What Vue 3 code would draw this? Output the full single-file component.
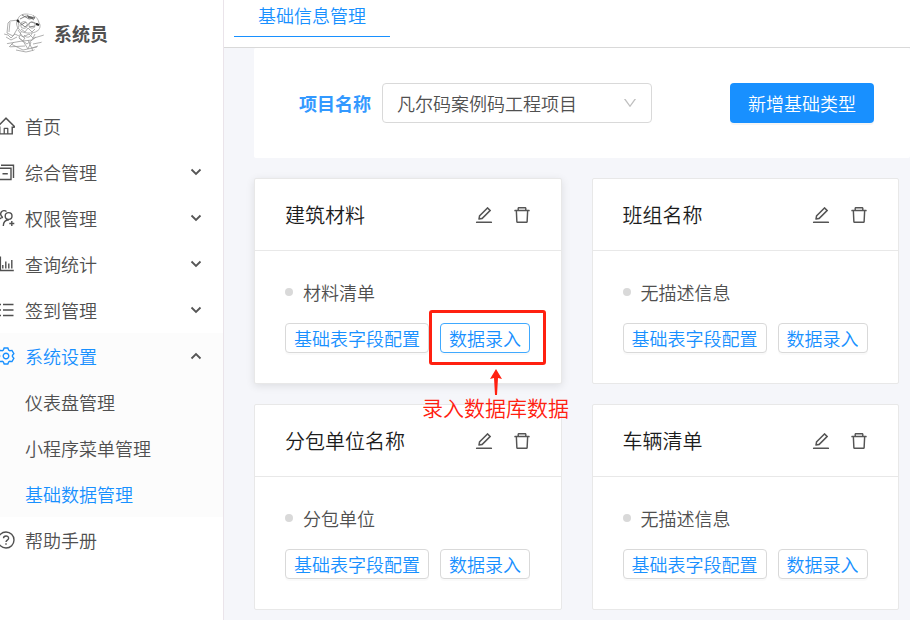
<template>
  <div class="layout">
    <aside class="sidebar">
      <div class="user">
        <svg class="avatar" width="40" height="40" viewBox="0 0 40 40" fill="none" stroke="#9a9a9a" stroke-width="0.8">
          <path d="M4 10L6 8L14 7L15 13L9 23L3 20L4 10M6 9L5 19M0 21L4 22L7 25L11 21L15 23M2 24L7 27L13 24"/>
          <path d="M14 7C14 3 18 1 22 1C29 0 34 4 35 10C37 12 36 17 33 18C30 21 17 21 15 16C12 13 12 9 14 7"/>
          <path d="M16 6L22 3L31 5M18 2L25 6L31 5L29 2M23 2L30 7M15 9L21 14L27 9L34 11M17 12L22 9M25 14L31 13" stroke="#666"/>
          <circle cx="20" cy="12" r="3.4"/>
          <circle cx="28" cy="12" r="3.2"/>
          <path d="M17 19L15 25L19 28L28 27L31 21M20 22C23 26 27 24 28 20M19 28L24 36L27 29M24 27L29 38M15 25L23 31L32 24M16 22L21 25L18 29M14 17L19 24L25 21L30 26M17 16L21 19L24 15L28 19L31 16"/>
          <path d="M1 31L18 28M3 34L21 33M30 25L40 22M29 31L39 29M7 31L19 37L33 34M12 37L22 39L31 37M28 35L34 33M10 29L5 34"/>
          <path d="M13 7L15 9M32 11L35 12" stroke="#222" stroke-width="2"/>
          <path d="M24 4L29 5" stroke="#666" stroke-width="2"/>
        </svg>
        <span>系统员</span>
      </div>

      <nav class="menu">
        <div v-for="item in menu" :key="item.label" class="group" :class="{ open: item.children }">
          <a href="#" class="menu-item" :class="{ active: item.children }">
            <svg v-if="item.icon.fill" class="icon" width="18" height="18" viewBox="64 64 896 896" fill="currentColor">
              <path :d="item.icon.fill"/>
            </svg>
            <svg v-else class="icon" width="18" height="18" viewBox="0 0 18 18" fill="none" stroke="currentColor" stroke-width="1.4">
              <path :d="item.icon.line"/>
            </svg>
            <span>{{ item.label }}</span>
            <svg v-if="item.arrow" class="arrow" width="12" height="8" viewBox="0 0 12 8" fill="none" stroke="#555" stroke-width="1.8">
              <path :d="item.children ? 'M1.5 6.5L6 2L10.5 6.5' : 'M1.5 1.5L6 6L10.5 1.5'"/>
            </svg>
          </a>
          <a v-for="child in item.children" :key="child" href="#" class="menu-item sub" :class="{ active: child === current }">
            {{ child }}
          </a>
        </div>
      </nav>
    </aside>

    <main class="main">
      <header class="tabs">
        <a href="#" class="tab">基础信息管理</a>
      </header>

      <section class="filter">
        <label for="project">项目名称</label>
        <div class="select-box">
          <select id="project" v-model="project">
            <option>凡尔码案例码工程项目</option>
          </select>
          <svg width="14" height="14" viewBox="64 64 896 896" fill="#bfbfbf">
            <path :d="icons.down"/>
          </svg>
        </div>
        <button class="primary">新增基础类型</button>
      </section>

      <section class="cards">
        <article v-for="(card, i) in cards" :key="card.title" class="card" :class="{ raised: i === 0 }">
          <div class="card-head">
            <h3>{{ card.title }}</h3>
            <button class="icon-btn" aria-label="编辑">
              <svg width="18" height="18" viewBox="64 64 896 896" fill="currentColor"><path :d="icons.edit"/></svg>
            </button>
            <button class="icon-btn" aria-label="删除">
              <svg width="18" height="18" viewBox="64 64 896 896" fill="currentColor"><path :d="icons.trash"/></svg>
            </button>
          </div>
          <div class="card-body">
            <p class="desc">{{ card.desc }}</p>
            <div class="actions">
              <button class="small">基础表字段配置</button>
              <div class="entry">
                <button class="small" :class="{ focused: i === 0 }">数据录入</button>
                <div v-if="i === 0" class="mark">
                  <div class="mark-note">
                    <svg width="12" height="26" viewBox="0 0 12 26" fill="#ff2010">
                      <path d="M6 0L12 10L8 9L7 26H5L4 9L0 10Z"/>
                    </svg>
                    <span>录入数据库数据</span>
                  </div>
                </div>
              </div>
            </div>
          </div>
        </article>
      </section>
    </main>
  </div>
</template>

<script setup>
import { ref } from 'vue'

// six teeth around a small hub
const gear = () => {
  const points = []
  for (let k = 0; k < 6; k++) {
    for (const [offset, r] of [[-24, 6.5], [-13, 8.2], [13, 8.2], [24, 6.5]]) {
      const a = ((k * 60 + 30 + offset) * Math.PI) / 180
      points.push(`${(9 + r * Math.cos(a)).toFixed(2)} ${(9 + r * Math.sin(a)).toFixed(2)}`)
    }
  }
  return `M${points.join('L')}Z M11.8 9A2.8 2.8 0 1 1 6.2 9A2.8 2.8 0 1 1 11.8 9Z`
}

const icons = {
  home: 'M946.5 505L560.1 118.8l-25.9-25.9a31.5 31.5 0 0 0-44.4 0L77.5 505a63.9 63.9 0 0 0-18.8 46c.4 35.2 29.7 63.3 64.9 63.3h42.5V940h691.8V614.3h43.4c17.1 0 33.2-6.7 45.3-18.8a63.6 63.6 0 0 0 18.7-45.3c0-17-6.7-33.1-18.8-45.2zM568 868H456V664h112v204zm217.9-325.7V868H632V640c0-22.1-17.9-40-40-40H432c-22.1 0-40 17.9-40 40v228H238.1V542.3h-96l370-369.7 23.1 23.1L882 542.3h-96.1z',
  down: 'M884 256h-75c-5.1 0-9.9 2.5-12.9 6.6L512 654.2 227.9 262.6c-3-4.1-7.8-6.6-12.9-6.6h-75c-6.5 0-10.3 7.4-6.5 12.7l352.6 486.1c12.8 17.6 39 17.6 51.7 0l352.6-486.1c3.9-5.3.1-12.7-6.4-12.7z',
  edit: 'M257.7 752c2 0 4-.2 6-.5L431.9 722c2-.4 3.9-1.3 5.3-2.8l423.9-423.9a9.96 9.96 0 0 0 0-14.1L694.9 114.9c-1.9-1.9-4.4-2.9-7.1-2.9s-5.2 1-7.1 2.9L256.8 538.8c-1.5 1.5-2.4 3.3-2.8 5.3l-29.5 168.2a33.5 33.5 0 0 0 9.4 29.8c6.6 6.4 14.9 9.9 23.8 9.9zm67.4-174.4L687.8 215l73.3 73.3-362.7 362.6-88.9 15.7 15.6-89zM880 836H144c-17.7 0-32 14.3-32 32v36c0 4.4 3.6 8 8 8h784c4.4 0 8-3.6 8-8v-36c0-17.7-14.3-32-32-32z',
  trash: 'M360 184h-8c4.4 0 8-3.6 8-8v8h304v-8c0 4.4 3.6 8 8 8h-8v72h72v-80c0-35.3-28.7-64-64-64H352c-35.3 0-64 28.7-64 64v80h72v-72zm504 72H160c-17.7 0-32 14.3-32 32v32c0 4.4 3.6 8 8 8h60.4l24.7 523c1.6 34.1 29.8 61 63.9 61h454c34.2 0 62.3-26.8 63.9-61l24.7-523H888c4.4 0 8-3.6 8-8v-32c0-17.7-14.3-32-32-32zM731.3 840H292.7l-24.2-512h487l-24.2 512z'
}

const current = ref('基础数据管理')
const project = ref('凡尔码案例码工程项目')

const menu = [
  { label: '首页', icon: { fill: icons.home } },
  { label: '综合管理', arrow: true, icon: { line: 'M2 5.2H14V16.5H2ZM4 2.2H16.5V15M5.5 10.8H10.8' } },
  { label: '权限管理', arrow: true, icon: { line: 'M15 7A3.4 3.4 0 1 1 8.2 7A3.4 3.4 0 1 1 15 7ZM6.3 17C6.3 13.5 8.5 11 12 10.8M14.8 12V17M12.3 14.5H17.3M9.5 2.6A3.4 3.4 0 1 0 5.5 8M1 14C1 11 2.8 9 6 8.4' } },
  { label: '查询统计', arrow: true, icon: { line: 'M3.4 1.5V15.5H16.8M5.8 10V13.5M8.8 6.5V13.5M11.8 8.5V13.5M14.8 5V13.5' } },
  { label: '签到管理', arrow: true, icon: { line: 'M6 3.5H16.5M6 9H16.5M6 14.5H16.5M1.5 3.5H4M1.5 9H4M1.5 14.5H4' } },
  {
    label: '系统设置',
    arrow: true,
    icon: { line: gear() },
    children: ['仪表盘管理', '小程序菜单管理', '基础数据管理']
  },
  { label: '帮助手册', icon: { line: 'M17 9A8 8 0 1 1 1 9A8 8 0 1 1 17 9ZM6.5 7.3C6.5 4.2 11.6 4.2 11.6 7.2C11.6 9.2 9 9 9 11M9 12.3V13.8' } }
]

const cards = [
  { title: '建筑材料', desc: '材料清单' },
  { title: '班组名称', desc: '无描述信息' },
  { title: '分包单位名称', desc: '分包单位' },
  { title: '车辆清单', desc: '无描述信息' }
]
</script>

<style>
body {
  margin: 0;
  background: #f5f6fa;
}
</style>

<style scoped>
.layout {
  display: flex;
  min-height: 100vh;
  font-family: "Noto Sans CJK SC", sans-serif;
  font-size: 18px;
  font-weight: 350;
  line-height: 24px;
  color: #505050;
}

a {
  color: inherit;
  text-decoration: none;
}

button,
select {
  box-sizing: border-box;
  font: inherit;
  cursor: pointer;
}

svg {
  display: block;
  flex: none;
}

.sidebar {
  flex: none;
  width: 223px;
  overflow: hidden;
  background: #fff;
  border-right: 1px solid #eae4ea;
}

.user {
  display: flex;
  align-items: center;
  gap: 10px;
  height: 40px;
  padding: 13px 4px 50px;
  font-weight: 700;
}

.avatar {
  border-radius: 50%;
}

.group.open {
  background: #fcfcfc;
}

.menu-item {
  display: flex;
  align-items: center;
  height: 46px;
  padding-right: 21px;
}

.menu-item .icon {
  margin: 0 10px 0 -3px;
}

.menu-item .arrow {
  margin-left: auto;
}

.menu-item.sub {
  padding-left: 25px;
}

.menu-item.active {
  color: #1890ff;
}

.main {
  flex: 1;
  min-width: 0;
}

.tabs {
  display: flex;
  align-items: flex-start;
  height: 47px;
  padding-left: 10px;
  background: #fff;
  border-bottom: 1px solid #d9d9d9;
}

.tab {
  padding: 3px 24px 9px;
  border-bottom: 1px solid #1890ff;
  color: #1890ff;
}

.filter {
  display: flex;
  align-items: center;
  margin-left: 30px;
  padding: 35px 36px 35px 45px;
  background: #fff;
  border-radius: 2px;
}

.filter label {
  margin-right: 11px;
  white-space: nowrap;
  font-weight: 700;
  color: #3399ff;
}

.select-box {
  position: relative;
  flex: 0 1 270px;
}

.select-box select {
  width: 100%;
  height: 40px;
  padding: 0 36px 0 14px;
  border: 1px solid #d9d9d9;
  border-radius: 4px;
  background: #fff;
  color: #505050;
  appearance: none;
}

.select-box svg {
  position: absolute;
  top: 13px;
  right: 15px;
  pointer-events: none;
}

.primary {
  height: 40px;
  margin-left: auto;
  padding: 0 18px;
  border: 0;
  border-radius: 4px;
  background: #1890ff;
  box-shadow: 0 2px 0 rgba(0, 0, 0, 0.04);
  color: #fff;
  white-space: nowrap;
}

.cards {
  display: grid;
  grid-template-columns: repeat(2, 1fr);
  gap: 20px 30px;
  padding: 20px 11px 8px 30px;
}

.card {
  background: #fff;
  border: 1px solid #e8e8e8;
  border-radius: 2px;
}

.card.raised {
  box-shadow: 0 2px 8px rgba(0, 0, 0, 0.1);
}

.card-head {
  display: flex;
  align-items: center;
  gap: 20px;
  height: 71px;
  padding: 0 30px;
  border-bottom: 1px solid #e8e8e8;
}

.card-head h3 {
  flex: 1;
  margin: 0;
  font-size: 20px;
  font-weight: 350;
  color: #1c1c1c;
}

.icon-btn {
  padding: 0;
  border: 0;
  background: none;
  color: #555;
}

.card-body {
  padding: 29px 30px 30px;
}

.desc {
  display: flex;
  align-items: center;
  gap: 10px;
  margin: 0 0 19px;
}

.desc::before {
  content: '';
  width: 8px;
  height: 8px;
  border-radius: 50%;
  background: #d9d9d9;
}

.actions {
  display: flex;
  gap: 11px;
}

.small {
  display: block;
  height: 30px;
  padding: 0 8px;
  border: 1px solid #d9d9d9;
  border-radius: 4px;
  background: #fff;
  box-shadow: 0 2px 0 rgba(0, 0, 0, 0.02);
  line-height: 28px;
  color: #1890ff;
  white-space: nowrap;
}

.small.focused {
  border-color: #40a9ff;
}

.entry {
  position: relative;
}

/* red callout over the data entry button */
.mark {
  position: absolute;
  z-index: 2;
  inset: -13px -16px -12px -11px;
  border: 3px solid #ff2010;
  border-radius: 3px;
  pointer-events: none;
}

.mark-note {
  position: absolute;
  top: 56px;
  right: -26px;
  display: flex;
  flex-direction: column;
  align-items: center;
  font-size: 21px;
  line-height: 24px;
  color: #ff2010;
  white-space: nowrap;
}
</style>
